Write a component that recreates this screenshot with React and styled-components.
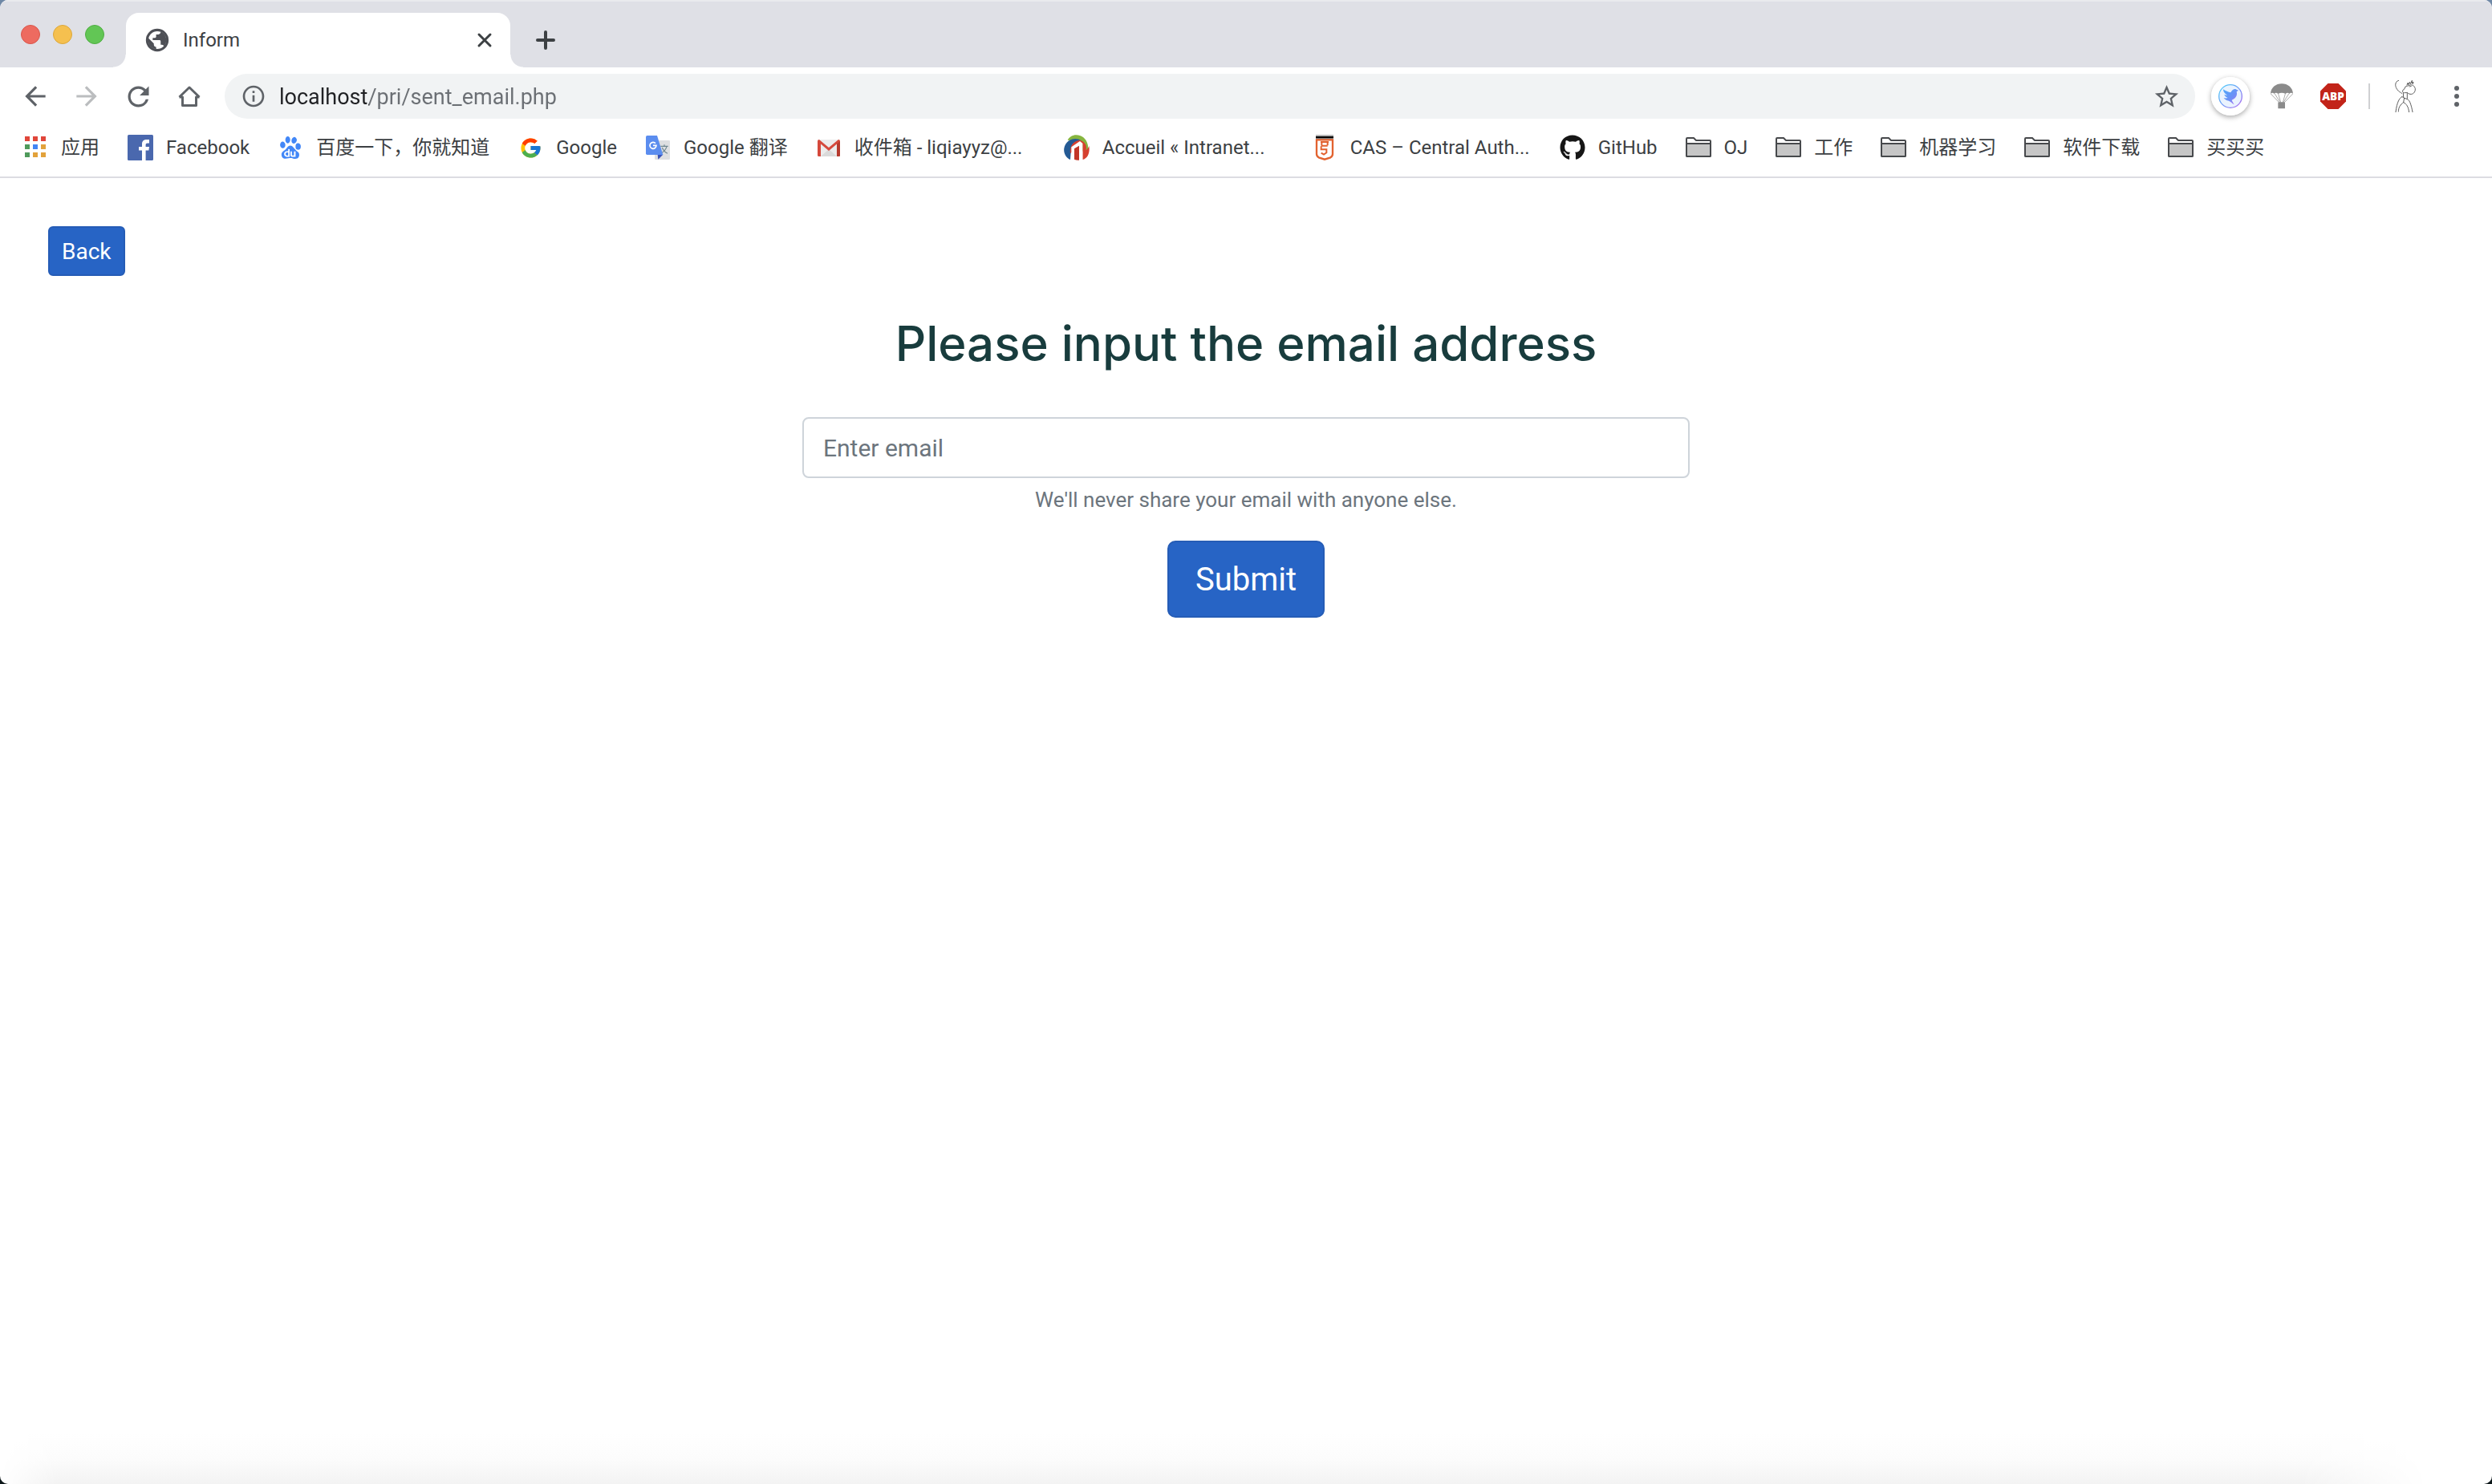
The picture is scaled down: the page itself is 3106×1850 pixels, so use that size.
import React from "react";
import styled, { createGlobalStyle } from "styled-components";
import { MdArrowBack, MdArrowForward, MdRefresh, MdInfoOutline, MdStarBorder } from "react-icons/md";
import { FcGoogle } from "react-icons/fc";
import { FaGithub } from "react-icons/fa";
import { SiBaidu } from "react-icons/si";

const uiFont = `Roboto, "Noto Sans CJK SC", sans-serif`;

const GlobalStyle = createGlobalStyle`
  *, *::before, *::after { box-sizing: border-box; }
  html { background: linear-gradient(#6f88a6, #0c1618); }
  body { margin: 0; font-family: ${uiFont}; }
  button, input { font-family: inherit; }
`;

const Window = styled.div`
  display: flex;
  flex-direction: column;
  min-height: 100vh;
  overflow: hidden;
  border-radius: 10px;
  background: #ffffff;
`;

const TabStrip = styled.header`
  display: flex;
  align-items: flex-end;
  height: 84px;
  padding-left: 26px;
  background: #dfe0e6;
  box-shadow: inset 0 2px 0 #e9eaee;
`;

const TrafficLights = styled.div`
  display: flex;
  align-items: center;
  gap: 16px;
  height: 82px;
  margin-right: 27px;
`;

const Light = styled.button`
  width: 24px;
  height: 24px;
  padding: 0;
  border: 1px solid ${(p) => p.$edge};
  border-radius: 50%;
  background: ${(p) => p.$color};
`;

const Tab = styled.div`
  position: relative;
  display: flex;
  align-items: center;
  width: 479px;
  height: 68px;
  padding: 0 16px 0 22px;
  border-radius: 16px 16px 0 0;
  background: #ffffff;
  color: #4e5056;

  &::before,
  &::after {
    content: "";
    position: absolute;
    bottom: 0;
    width: 16px;
    height: 16px;
  }
  &::before {
    right: 100%;
    background: radial-gradient(circle at 0 0, transparent 15px, #ffffff 16px);
  }
  &::after {
    left: 100%;
    background: radial-gradient(circle at 100% 0, transparent 15px, #ffffff 16px);
  }
`;

const TabTitle = styled.span`
  flex: 1;
  margin-left: 15px;
  font-size: 24px;
  line-height: 28px;
  color: #3c4043;
`;

const IconButton = styled.button`
  display: flex;
  flex: none;
  align-items: center;
  justify-content: center;
  width: ${(p) => p.$width || 64}px;
  height: ${(p) => p.$height || 64}px;
  padding: 0;
  border: 0;
  background: transparent;
  color: ${(p) => p.$color || "#5f6368"};
`;

const Toolbar = styled.nav`
  display: flex;
  align-items: center;
  height: 72px;
  padding: 0 24px 0 12px;
`;

const AddressBar = styled.div`
  display: flex;
  flex: 1;
  align-items: center;
  gap: 16px;
  height: 56px;
  margin: 0 12px;
  padding: 0 20px;
  border-radius: 28px;
  background: #f1f3f4;
  color: #5f6368;

  svg { flex: none; }
`;

const AddressInput = styled.input`
  flex: 1;
  min-width: 0;
  height: 40px;
  padding: 2px 0 0;
  border: 0;
  outline: 0;
  font-size: 27px;
  background: linear-gradient(to right, #202124 112px, #6b6f74 112px);
  background-clip: text;
  -webkit-text-fill-color: transparent;
`;

const Divider = styled.span`
  width: 2px;
  height: 32px;
  margin-left: 12px;
  background: #cfd0d2;
`;

const ExtensionDisc = styled.span`
  display: flex;
  border-radius: 50%;
  box-shadow: 0 2px 6px rgba(0, 0, 0, 0.35);
`;

const BookmarkBar = styled.nav`
  display: flex;
  align-items: center;
  gap: 35px;
  height: 66px;
  padding: 0 28px 8px;
  border-bottom: 2px solid #dcdce2;
`;

const Bookmark = styled.a`
  display: flex;
  flex: none;
  align-items: center;
  gap: 16px;
  color: #3c4043;
  font-size: 24px;
  line-height: 32px;
  text-decoration: none;
  white-space: nowrap;
`;

const BookmarkIcon = styled.span`
  display: flex;
  align-items: center;
  justify-content: center;
  width: 32px;
  height: 32px;
`;

const BookmarkLabel = styled.span`
  min-width: ${(p) => (p.$clipped ? "226px" : "0")};
`;

const Page = styled.main`
  display: flex;
  flex: 1;
  flex-direction: column;
  align-items: center;
  padding: 60px 60px 0;
`;

const PrimaryButton = styled.button`
  padding: 0 ${(p) => (p.$large ? 33 : 15)}px;
  height: ${(p) => (p.$large ? 96 : 62)}px;
  border: 2px solid #255cb6;
  border-radius: ${(p) => (p.$large ? 10 : 6)}px;
  background: #2764c5;
  color: #ffffff;
  font-size: ${(p) => (p.$large ? 40 : 28)}px;
`;

const BackRow = styled.div`
  align-self: flex-start;
  display: flex;
`;

const Title = styled.h1`
  margin: 48px 0 56px;
  color: #183c3d;
  font-family: Inter, sans-serif;
  font-size: 60px;
  font-weight: 500;
  line-height: 72px;
  text-align: center;
`;

const EmailForm = styled.form`
  display: flex;
  flex-direction: column;
  align-items: center;
  width: 100%;
  max-width: 1106px;
`;

const EmailInput = styled.input`
  width: 100%;
  height: 76px;
  padding: 0 24px;
  border: 2px solid #ced4da;
  border-radius: 8px;
  background: #ffffff;
  color: #495057;
  font-size: 30px;

  &::placeholder { color: #6c757d; opacity: 1; }
`;

const Hint = styled.small`
  margin: 8px 0 32px;
  color: #6c757d;
  font-size: 26px;
  line-height: 38px;
`;

const BottomShade = styled.div`
  height: 64px;
  background: linear-gradient(to bottom, #ffffff, #fcfcfc 50%, #f3f3f3);
  mask-image: linear-gradient(to right, transparent, #000 70px, #000 calc(100% - 240px), transparent calc(100% - 80px));
`;

const GlobeIcon = () => (
  <svg width="34" height="34" viewBox="0 0 24 24">
    <circle cx="12" cy="12" r="10" fill="currentColor" />
    <circle cx="12" cy="12" r="7.8" fill="#ffffff" />
    <path
      fill="currentColor"
      d="M11 19.93c-3.95-.49-7-3.85-7-7.93 0-.62.08-1.21.21-1.79L9 15v1c0 1.1.9 2 2 2v1.93zm6.9-2.54c-.26-.81-1-1.39-1.9-1.39h-1v-3c0-.55-.45-1-1-1H8v-2h2c.55 0 1-.45 1-1V7h2c1.1 0 2-.9 2-2v-.41c2.93 1.19 5 4.06 5 7.41 0 2.08-.8 3.97-2.1 5.39z"
    />
  </svg>
);

const CloseIcon = () => (
  <svg width="20" height="20" viewBox="0 0 20 20" fill="none" stroke="currentColor" strokeWidth="3" strokeLinecap="round">
    <path d="M3 3L17 17M17 3L3 17" />
  </svg>
);

const PlusIcon = () => (
  <svg width="24" height="24" viewBox="0 0 24 24" fill="none" stroke="currentColor" strokeWidth="4" strokeLinecap="round">
    <path d="M12 2V22M2 12H22" />
  </svg>
);

const HomeIcon = () => (
  <svg width="32" height="32" viewBox="0 0 32 32" fill="none" stroke="currentColor" strokeWidth="3">
    <path d="M3.5 17L16 5L28.5 17M3.5 17H7.5V27.5H24.5V17H28.5" strokeLinejoin="round" />
  </svg>
);

const MenuIcon = () => (
  <svg width="8" height="32" viewBox="0 0 8 32" fill="currentColor">
    <circle cx="4" cy="6" r="3" />
    <circle cx="4" cy="16" r="3" />
    <circle cx="4" cy="26" r="3" />
  </svg>
);

const BirdIcon = () => (
  <svg width="48" height="48" viewBox="348 48 144 144">
    <defs>
      <linearGradient id="ring" x1="0" y1="0" x2="1" y2="1">
        <stop offset="0" stopColor="#4fd4fb" />
        <stop offset="0.5" stopColor="#6f9bf5" />
        <stop offset="1" stopColor="#b46bf0" />
      </linearGradient>
      <linearGradient id="bird" x1="0" y1="0" x2="1" y2="1">
        <stop offset="0" stopColor="#4fa9fa" />
        <stop offset="0.55" stopColor="#6c90f6" />
        <stop offset="1" stopColor="#c06cf0" />
      </linearGradient>
    </defs>
    <circle cx="420" cy="120" r="72" fill="#ffffff" />
    <circle cx="420" cy="120" r="43" fill="#eaf3fe" stroke="url(#ring)" strokeWidth="4" />
    <path
      d="M393 94C402 101 412 104 421 106C424 98 432 92 439 93C443 95 446 97 450 98L443 103C446 112 443 121 437 127C433 131 428 132 425 135C427 140 431 145 434 151C426 146 421 140 414 137C405 137 400 132 395 126C401 128 405 128 410 126C403 123 399 119 397 113C401 115 404 116 408 116C398 110 393 103 393 94Z"
      fill="url(#bird)"
    />
  </svg>
);

const ParachuteIcon = () => (
  <svg width="32" height="32" viewBox="564 72 96 96">
    <path d="M570 111C571 87 590 73 612 73C634 73 653 87 654 111Q647 104 640 111Q634 104 626 111Q612 103 598 111Q590 104 584 111Q577 104 570 111Z" fill="#8b8b8b" />
    <path d="M571 111L602 143M586 111L606 143M599 111L608 143M625 111L616 143M638 111L618 143M653 111L622 143" stroke="#9a9a9a" strokeWidth="2.5" />
    <rect x="598" y="142" width="26" height="24" rx="2" fill="#8b8b8b" />
  </svg>
);

const AbpIcon = () => (
  <svg width="32" height="32" viewBox="0 0 32 32">
    <path d="M9.5 0H22.5L32 9.5V22.5L22.5 32H9.5L0 22.5V9.5Z" fill="#c22419" />
    <text x="16" y="21" textAnchor="middle" fill="#ffffff" fontFamily="Open Sans, sans-serif" fontWeight="800" fontSize="13.5">ABP</text>
  </svg>
);

const AvatarIcon = () => (
  <svg width="40" height="40" viewBox="84 30 120 120" fill="none" stroke="#444444" strokeWidth="2.6" strokeLinecap="round">
    <path d="M119 31C110 33 105 43 108 53C111 66 122 74 131 79" strokeDasharray="9 3" />
    <path d="M144 55C149 49 154 53 160 49C168 44 179 51 181 62C182 75 172 84 162 82C157 81 152 79 151 76" />
    <path d="M144 55C139 59 143 63 138 65C133 66 132 73 136 76C140 79 146 75 150 77M136 78L137 92M151 80L151 98" />
    <path d="M150 48L153 40L156 47L160 37L163 44L169 31L168 42L174 36L172 44M160 54L166 52" />
    <path d="M131 92C122 97 113 110 108 149M118 147C118 131 126 121 137 113C147 118 156 128 158 151M132 92L140 96L137 113M140 97C151 100 158 103 161 112C166 124 169 137 171 149" />
  </svg>
);

const AppsIcon = () => {
  const colors = ["#e0463a", "#e0463a", "#e0463a", "#4f9a5b", "#4285f4", "#e2a23b", "#4f9a5b", "#e2a23b", "#e2a23b"];
  return (
    <svg width="32" height="32" viewBox="0 0 32 32">
      {colors.map((color, i) => (
        <rect key={i} x={3 + (i % 3) * 10} y={2 + Math.floor(i / 3) * 10} width="6" height="6" fill={color} />
      ))}
    </svg>
  );
};

const FacebookIcon = () => (
  <svg width="32" height="32" viewBox="0 0 32 32">
    <rect width="32" height="32" rx="1.5" fill="#4a68ae" />
    <path d="M18 32V19.5H14V15H18V11.5C18 7.8 20.3 6 24 6H27V10.5H25C23.2 10.5 22.6 11.2 22.6 12.8V15H27L26.4 19.5H22.6V32Z" fill="#ffffff" />
  </svg>
);

const TranslateIcon = () => (
  <svg width="32" height="32" viewBox="1422 39 96 96">
    <rect x="1458" y="60" width="57" height="72" rx="4" fill="#dedfe1" />
    <path d="M1480 82H1508M1494 76V82M1503 83C1500 95 1490 104 1480 109M1486 87C1490 97 1498 105 1506 109" fill="none" stroke="#6f8790" strokeWidth="3.5" />
    <path d="M1469 113H1489L1471 131Z" fill="#3a54b8" />
    <path d="M1430 42H1467L1489 114H1430Q1425 114 1425 109V47Q1425 42 1430 42Z" fill="#5b8def" />
    <path d="M1461 71A12 12 0 1 0 1464 79H1452" fill="none" stroke="#ffffff" strokeWidth="5" />
  </svg>
);

const GmailIcon = () => (
  <svg width="32" height="32" viewBox="0 0 32 32">
    <rect x="2" y="6" width="28" height="21" rx="2" fill="#ececec" />
    <path d="M6 27L16 18L26 27Z" fill="#dadada" />
    <path d="M2 8V25.5Q2 27 3.5 27H6V11.5L16 20L26 11.5V27H28.5Q30 27 30 25.5V8Q30 6 28 6L16 16L4 6Q2 6 2 8Z" fill="#d5493c" />
    <path d="M26 11.5L30 8V25.5Q30 27 28.5 27H26Z" fill="#b63a2e" />
  </svg>
);

const IntranetIcon = () => (
  <svg width="32" height="32" viewBox="48 38 96 96">
    <path d="M62 58C70 42 90 34 110 42C130 50 142 72 138 98L118 100L106 62Z" fill="#86b53f" />
    <path d="M72 131C52 122 42 98 53 76C64 54 94 46 112 60L120 70L84 80L74 104Z" fill="#245a94" />
    <path d="M72 108C68 84 82 60 108 58C128 64 136 80 130 96C136 92 140 86 142 80C146 104 138 126 118 131V72Z" fill="#d6402f" />
    <path d="M76 131V84L108 62L118 70V131H108L104 84L88 92V132Z" fill="#ffffff" />
    <path d="M87 90L105 79V133Q95 134 87 130Z" fill="#c23527" />
  </svg>
);

const CasIcon = () => (
  <svg width="32" height="32" viewBox="975 39 96 96">
    <rect x="990" y="39" width="66" height="18" fill="#b5b5b5" />
    <rect x="990" y="45" width="66" height="7" fill="#000000" />
    <path d="M993 58H1053V111Q1053 119 1045 124L1023 131L1001 124Q993 119 993 111Z" fill="#ffffff" stroke="#e2622f" strokeWidth="7" />
    <path d="M1008 66H1038M1012 66V79M1034 66V79M1010 80H1034M1010 82V94H1030V106L1020 113L1010 107" fill="none" stroke="#e2622f" strokeWidth="6" />
  </svg>
);

const FolderIcon = () => (
  <svg width="32" height="32" viewBox="0 0 32 32">
    <path d="M1 26V5Q1 4 2 4H10L13 7H30Q31 7 31 8V26Q31 27 30 27H2Q1 27 1 26Z" fill="#ffffff" stroke="#47494c" strokeWidth="2" />
    <path d="M1 11H31V26Q31 27 30 27H2Q1 27 1 26Z" fill="#c6c6c6" stroke="#47494c" strokeWidth="2" />
  </svg>
);

const bookmarks = [
  { label: "应用", icon: <AppsIcon /> },
  { label: "Facebook", icon: <FacebookIcon /> },
  { label: "百度一下，你就知道", icon: <SiBaidu size={28} color="#4287f7" /> },
  { label: "Google", icon: <FcGoogle size={29} /> },
  { label: "Google 翻译", icon: <TranslateIcon /> },
  { label: "收件箱 - liqiayyz@...", icon: <GmailIcon />, clipped: true },
  { label: "Accueil « Intranet...", icon: <IntranetIcon />, clipped: true },
  { label: "CAS – Central Auth...", icon: <CasIcon />, clipped: true },
  { label: "GitHub", icon: <FaGithub size={32} color="#161616" /> },
  { label: "OJ", icon: <FolderIcon /> },
  { label: "工作", icon: <FolderIcon /> },
  { label: "机器学习", icon: <FolderIcon /> },
  { label: "软件下载", icon: <FolderIcon /> },
  { label: "买买买", icon: <FolderIcon /> },
];

export default function App() {
  return (
    <>
      <GlobalStyle />
      <Window>
        <TabStrip>
          <TrafficLights>
            <Light $color="#ed6b60" $edge="#d9564b" aria-label="Close window" />
            <Light $color="#f5c04f" $edge="#dca73a" aria-label="Minimize window" />
            <Light $color="#62c655" $edge="#4fae42" aria-label="Zoom window" />
          </TrafficLights>
          <Tab>
            <GlobeIcon />
            <TabTitle>Inform</TabTitle>
            <IconButton $width={32} $height={32} $color="#3c4043" aria-label="Close tab">
              <CloseIcon />
            </IconButton>
          </Tab>
          <IconButton $width={88} $height={68} $color="#3c4043" aria-label="New tab">
            <PlusIcon />
          </IconButton>
        </TabStrip>

        <Toolbar>
          <IconButton aria-label="Back"><MdArrowBack size={38} /></IconButton>
          <IconButton $color="#bbbdbf" aria-label="Forward"><MdArrowForward size={38} /></IconButton>
          <IconButton aria-label="Reload"><MdRefresh size={39} /></IconButton>
          <IconButton aria-label="Home"><HomeIcon /></IconButton>
          <AddressBar>
            <MdInfoOutline size={32} />
            <AddressInput aria-label="Address" defaultValue="localhost/pri/sent_email.php" spellCheck={false} />
            <IconButton $width={32} $height={32} aria-label="Bookmark this page">
              <MdStarBorder size={35} />
            </IconButton>
          </AddressBar>
          <IconButton aria-label="Bird extension">
            <ExtensionDisc><BirdIcon /></ExtensionDisc>
          </IconButton>
          <IconButton aria-label="Parachute extension"><ParachuteIcon /></IconButton>
          <IconButton aria-label="Ad blocker"><AbpIcon /></IconButton>
          <Divider />
          <IconButton $width={88} aria-label="Profile"><AvatarIcon /></IconButton>
          <IconButton $width={40} aria-label="Menu"><MenuIcon /></IconButton>
        </Toolbar>

        <BookmarkBar>
          {bookmarks.map(({ label, icon, clipped }) => (
            <Bookmark key={label} href="#">
              <BookmarkIcon>{icon}</BookmarkIcon>
              <BookmarkLabel $clipped={clipped}>{label}</BookmarkLabel>
            </Bookmark>
          ))}
        </BookmarkBar>

        <Page>
          <BackRow>
            <PrimaryButton type="button">Back</PrimaryButton>
          </BackRow>
          <Title id="title">Please input the email address</Title>
          <EmailForm onSubmit={(event) => event.preventDefault()}>
            <EmailInput type="email" placeholder="Enter email" aria-labelledby="title" aria-describedby="hint" />
            <Hint id="hint">We'll never share your email with anyone else.</Hint>
            <PrimaryButton $large type="submit">Submit</PrimaryButton>
          </EmailForm>
        </Page>
        <BottomShade />
      </Window>
    </>
  );
}
